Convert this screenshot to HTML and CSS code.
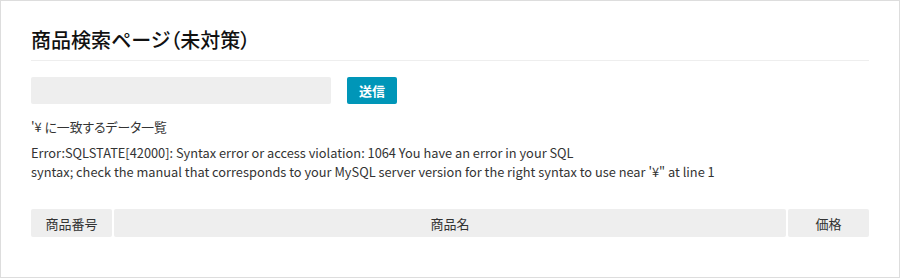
FILE: index.html
```html
<!DOCTYPE html>
<html lang="ja">
<head>
<meta charset="utf-8">
<title>商品検索ページ(未対策)</title>
<link rel="stylesheet" href="styles.css">
</head>
<body>
<div class="page">
  <h1 class="title">商品検索ページ（未対策）</h1>
  <form class="search">
    <input class="search-input" type="text" value="">
    <button class="search-btn" type="button">送信</button>
  </form>
  <p class="result">'¥ に一致するデータ一覧</p>
  <p class="error">Error:SQLSTATE[42000]: Syntax error or access violation: 1064 You have an error in your SQL<br>syntax; check the manual that corresponds to your MySQL server version for the right syntax to use near '¥" at line 1</p>
  <table class="items">
    <thead>
      <tr>
        <th class="col-id">商品番号</th>
        <th class="col-name">商品名</th>
        <th class="col-price">価格</th>
      </tr>
    </thead>
  </table>
</div>
</body>
</html>
```

FILE: styles.css
```css
* { box-sizing: border-box; }
html, body { margin: 0; padding: 0; background: #fff; }
body {
  font-family: "Noto Sans CJK JP", "Noto Sans", sans-serif;
  color: #333;
  width: 900px;
}
.page {
  width: 900px;
  height: 278px;
  border: 1px solid #ddd;
  padding: 25px 30px 0 30px;
}
.title {
  margin: 0;
  font-size: 20px;
  font-weight: 500;
  line-height: 27px;
  color: #111;
  padding-bottom: 7px;
  border-bottom: 1px solid #eee;
  font-feature-settings: "palt";
}
.search {
  display: flex;
  gap: 16px;
  margin-top: 16px;
}
.search-input {
  width: 300px;
  height: 27px;
  border: none;
  border-radius: 2px;
  background: #eee;
  margin: 0;
  padding: 0 8px;
  font: inherit;
}
.search-btn {
  width: 50px;
  height: 27px;
  border: none;
  border-radius: 2px;
  background: #0096b8;
  color: #fff;
  font-family: inherit;
  font-size: 13px;
  font-weight: 700;
  padding: 0;
  margin: 0;
}
.result {
  margin: 13px 0 0;
  font-size: 12.8px;
  line-height: 19px;
  font-feature-settings: "palt";
}
.error {
  margin: 7px 0 0;
  font-size: 12.8px;
  line-height: 19px;
}
.items {
  margin-top: 26px;
  margin-left: -2px;
  width: 842px;
  border-collapse: separate;
  border-spacing: 2px;
}
.items th {
  background: #eee;
  border-radius: 2px;
  height: 28px;
  padding: 0;
  font-size: 13px;
  font-weight: 400;
  color: #333;
  text-align: center;
}
.col-id, .col-price { width: 81px; }
```
